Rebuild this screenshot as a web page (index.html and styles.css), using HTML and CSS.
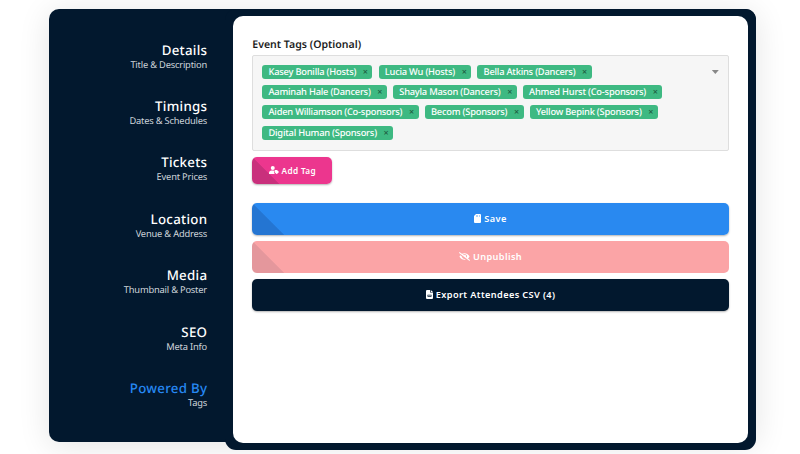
FILE: index.html
```html
<!DOCTYPE html>
<html lang="en">
<head>
<meta charset="utf-8">
<title>Event Tags</title>
<link rel="stylesheet" href="styles.css">
</head>
<body>
<main class="editor">
  <nav class="steps">
    <a class="step"><b>Details</b><span>Title &amp; Description</span></a>
    <a class="step"><b>Timings</b><span>Dates &amp; Schedules</span></a>
    <a class="step"><b>Tickets</b><span>Event Prices</span></a>
    <a class="step"><b>Location</b><span>Venue &amp; Address</span></a>
    <a class="step"><b>Media</b><span>Thumbnail &amp; Poster</span></a>
    <a class="step"><b>SEO</b><span>Meta Info</span></a>
    <a class="step active"><b>Powered By</b><span>Tags</span></a>
  </nav>
  <section class="frame">
    <div class="panel">
      <div class="label">Event Tags (Optional)</div>
      <div class="select">
        <div class="tags">
          <div class="row"><span class="tag">Kasey Bonilla (Hosts)<i>×</i></span><span class="tag">Lucia Wu (Hosts)<i>×</i></span><span class="tag">Bella Atkins (Dancers)<i>×</i></span></div>
          <div class="row"><span class="tag">Aaminah Hale (Dancers)<i>×</i></span><span class="tag">Shayla Mason (Dancers)<i>×</i></span><span class="tag">Ahmed Hurst (Co-sponsors)<i>×</i></span></div>
          <div class="row"><span class="tag">Aiden Williamson (Co-sponsors)<i>×</i></span><span class="tag">Becom (Sponsors)<i>×</i></span><span class="tag">Yellow Bepink (Sponsors)<i>×</i></span></div>
          <div class="row"><span class="tag">Digital Human (Sponsors)<i>×</i></span></div>
        </div>
        <span class="caret"></span>
      </div>
      <button class="btn add">
        <svg width="10" height="8" viewBox="0 0 20 16"><circle cx="7.500" cy="4" r="4"/><path d="M0 16v-2c0-3 2-5 5-5h4l1 1v4l2 2z"/><path d="M11 9.500q0-1.500 1.500-1.500H16l4 4-4 4h-1l-4-3.500z"/></svg>
        <span>Add Tag</span>
      </button>
      <button class="btn wide save">
        <svg width="7" height="9" viewBox="0 0 14 18"><path fill-rule="evenodd" d="M4 0h8q2 0 2 2v14q0 2-2 2H2q-2 0-2-2V4zM4 2.500v3h1v-3zm3 0v3h1v-3zm3 0v3h1v-3z"/></svg>
        <span>Save</span>
      </button>
      <button class="btn wide unpublish">
        <svg width="11" height="9" viewBox="0 0 640 512"><path d="M320 400c-76 0-137-59-143-133L72 186c-14 17-27 36-37 55a32 32 0 0 0 0 30c55 107 163 177 285 177 27 0 53-4 77-10l-52-40c-8 1-17 2-25 2zm314 58L523 373c34-28 62-62 82-102a32 32 0 0 0 0-30C550 135 442 64 320 64c-51 0-102 13-147 37L46 3a16 16 0 0 0-23 3L3 31a16 16 0 0 0 3 23l588 455a16 16 0 0 0 23-3l20-25a16 16 0 0 0-3-23zM450 317l-39-31a95 95 0 0 0-116-122c6 8 9 18 9 28l-1 10-74-57A143 143 0 0 1 450 317z"/></svg>
        <span>Unpublish</span>
      </button>
      <button class="btn wide export">
        <svg width="7" height="9" viewBox="0 0 14 18"><path fill-rule="evenodd" d="M2 0h6v5h6v11q0 2-2 2H2q-2 0-2-2V2q0-2 2-2zM9.500 0L14 4H9.500zM3 9.500v4h8v-4zM4 11h6v1H4z"/></svg>
        <span>Export Attendees CSV (4)</span>
      </button>
    </div>
  </section>
</main>
</body>
</html>
```

FILE: styles.css
```css
* { box-sizing: border-box; }
body {
  margin: 0;
  height: 454px;
  overflow: hidden;
  background: #fff;
  font-family: "Noto Sans", "Open Sans", sans-serif;
  text-rendering: geometricPrecision;
}
.editor {
  display: flex;
  align-items: flex-start;
  width: 706.500px;
  height: 432.500px;
  margin: 9px 0 0 49px;
  background: #02182e;
  border-radius: 10px;
  box-shadow: 0 4px 32px rgba(0, 0, 0, .11);
}
.steps {
  width: 176px;
  padding: 32.800px 18px 0 0;
  flex: none;
}
.step {
  display: flex;
  flex-direction: column;
  align-items: flex-end;
  height: 56.350px;
  color: #fff;
}
.step b {
  font-size: 13.300px;
  font-weight: 500;
  line-height: 17px;
  letter-spacing: .27px;
  margin-right: -.27px;
}
.step span {
  font-size: 9.300px;
  line-height: 12px;
  letter-spacing: -.19px;
  color: #d0d6dc;
}
.active b { color: #2688f4; }
.frame {
  width: 530.500px;
  height: 441px;
  padding: 7px 7.500px 7px 8px;
  border-radius: 11px;
  background: #02182e;
}
.panel {
  height: 427px;
  border-radius: 10px;
  background: #fff;
  padding: 22px 19.300px 0;
  display: flex;
  flex-direction: column;
  align-items: flex-start;
}
.label {
  font-size: 10.550px;
  font-weight: 600;
  line-height: 15px;
  color: #1c1c1c;
}
.select {
  display: flex;
  justify-content: space-between;
  width: 476.500px;
  height: 96px;
  margin-top: 2px;
  padding: 9px 9px 0;
  background: #f6f6f6;
  border: 1px solid #dedede;
  border-radius: 2px;
}
.tags { display: flex; flex-direction: column; gap: 6.200px; }
.row { display: flex; gap: 6.200px; }
.tag {
  display: flex;
  align-items: center;
  height: 14px;
  padding: 0 4.400px 0 6.200px;
  border-radius: 3px;
  background: #3eb982;
  color: #fff;
  font-size: 9.300px;
  font-weight: 500;
  line-height: 14px;
  letter-spacing: -.21px;
  white-space: nowrap;
}
.tag i {
  margin-left: 6.700px;
  font-size: 9px;
  font-style: normal;
  letter-spacing: 0;
  color: #1d5940;
}
.caret {
  margin: 5px 0 0;
  width: 7px;
  height: 4px;
  background: #888;
  clip-path: polygon(0 0, 100% 0, 50% 100%);
}
.btn {
  display: flex;
  align-items: center;
  justify-content: center;
  border: 0;
  border-radius: 5px;
  color: #fff;
  font: 600 9.200px "Noto Sans", sans-serif;
  letter-spacing: .38px;
  padding: 0 0 1px;
  box-shadow: 0 1px 2px rgba(0, 0, 0, .3);
}
.btn svg { fill: currentColor; }
.add {
  width: 80px;
  height: 27px;
  margin: 6px 0 19px;
  gap: 3px;
  font-size: 8.200px;
  background: linear-gradient(45deg, #c9307c 19px, #ec368e 19.500px);
}
.wide {
  width: 476.500px;
  height: 32px;
  margin-bottom: 6px;
  gap: 3px;
}
.save { background: linear-gradient(45deg, #2475d2 22.500px, #2989f0 23px); }
.unpublish {
  background: linear-gradient(45deg, #e4979c 22.500px, #fba4a6 23px);
  box-shadow: none;
}
.export { background: #02182e; }
```
